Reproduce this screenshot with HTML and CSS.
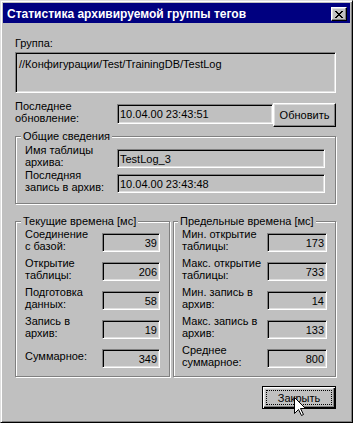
FILE: index.html
```html
<!DOCTYPE html>
<html lang="ru">
<head>
  <meta charset="UTF-8">
  <title>Статистика архивируемой группы тегов</title>
  <link rel="stylesheet" href="styles.css">
</head>
<body>
  <div class="window">
    <div class="titlebar">
      <span class="title">Статистика архивируемой группы тегов</span>
      <span class="close-btn">
        <svg width="8" height="7" viewBox="0 0 8 7" shape-rendering="crispEdges">
          <path d="M0 0h2v1h-2z M6 0h2v1h-2z M1 1h2v1h-2z M5 1h2v1h-2z M2 2h4v1h-4z M3 3h2v1h-2z M2 4h4v1h-4z M1 5h2v1h-2z M5 5h2v1h-2z M0 6h2v1h-2z M6 6h2v1h-2z" fill="#000"/>
        </svg>
      </span>
    </div>

    <div class="content">
      <div class="label">Группа:</div>
      <div class="field field-path">//Конфигурации/Test/TrainingDB/TestLog</div>

      <div class="row row-update">
        <div class="label label-update">Последнее<br>обновление:</div>
        <div class="field field-update">10.04.00 23:43:51</div>
        <button class="btn btn-update">Обновить</button>
      </div>

      <fieldset class="group group-general">
        <legend>Общие сведения</legend>
        <div class="row">
          <div class="label label-general">Имя таблицы<br>архива:</div>
          <div class="field field-general">TestLog_3</div>
        </div>
        <div class="row">
          <div class="label label-general">Последняя<br>запись в архив:</div>
          <div class="field field-general">10.04.00 23:43:48</div>
        </div>
      </fieldset>

      <div class="times">
        <fieldset class="group group-current">
          <legend>Текущие времена [мс]</legend>
          <div class="row">
            <div class="label">Соединение<br>с базой:</div>
            <div class="field field-num">39</div>
          </div>
          <div class="row">
            <div class="label">Открытие<br>таблицы:</div>
            <div class="field field-num">206</div>
          </div>
          <div class="row">
            <div class="label">Подготовка<br>данных:</div>
            <div class="field field-num">58</div>
          </div>
          <div class="row">
            <div class="label">Запись в<br>архив:</div>
            <div class="field field-num">19</div>
          </div>
          <div class="row">
            <div class="label label-single">Суммарное:</div>
            <div class="field field-num">349</div>
          </div>
        </fieldset>

        <fieldset class="group group-limits">
          <legend>Предельные времена [мс]</legend>
          <div class="row">
            <div class="label">Мин. открытие<br>таблицы:</div>
            <div class="field field-num">173</div>
          </div>
          <div class="row">
            <div class="label">Макс. открытие<br>таблицы:</div>
            <div class="field field-num">733</div>
          </div>
          <div class="row">
            <div class="label">Мин. запись в<br>архив:</div>
            <div class="field field-num">14</div>
          </div>
          <div class="row">
            <div class="label">Макс. запись в<br>архив:</div>
            <div class="field field-num">133</div>
          </div>
          <div class="row">
            <div class="label">Среднее<br>суммарное:</div>
            <div class="field field-num">800</div>
          </div>
        </fieldset>
      </div>

      <div class="footer">
        <button class="btn btn-default"><span class="focus">Закрыть</span></button>
      </div>
    </div>

    <!-- mouse pointer over the close button -->
    <svg class="cursor" width="12" height="20" viewBox="0 0 12 20">
      <polygon points="0.5,0.5 0.5,16.5 4.5,12.5 7.5,18.5 9.5,17.5 6.5,11.5 11.5,11.5" fill="#fff" stroke="#000" stroke-width="1"/>
    </svg>
  </div>
</body>
</html>
```

FILE: styles.css
```css
body {
  margin: 0;
  background: #c0c0c0;
}
.window {
  position: relative;
  width: 353px;
  height: 423px;
  box-sizing: border-box;
  padding: 2px;
  background: #c0c0c0;
  border: 1px solid;
  border-color: #dfdfdf #000 #000 #dfdfdf;
  box-shadow: inset 1px 1px #fff, inset -1px -1px #808080;
  font-family: "Liberation Sans", Arial, sans-serif;
  font-size: 11px;
  line-height: 12px;
  color: #000;
}
/* Заголовок окна */
.titlebar {
  display: flex;
  align-items: flex-start;
  height: 20px;
  background: #000080;
  color: #fff;
}
.title {
  flex: 1;
  padding: 2px 0 0 4px;
  font-size: 12px;
  font-weight: bold;
  line-height: 18px;
  white-space: nowrap;
}
.close-btn {
  display: flex;
  align-items: center;
  justify-content: center;
  width: 16px;
  height: 14px;
  box-sizing: border-box;
  margin: 4px 3px 0 0;
  background: #c0c0c0;
  border: 1px solid;
  border-color: #fff #000 #000 #fff;
  box-shadow: inset -1px -1px #808080, inset 1px 1px #dfdfdf;
}
.content {
  padding: 14px 14px 0 12px;
}
.label {
  white-space: nowrap;
}
/* Поля только для чтения */
.field {
  display: flex;
  align-items: center;
  box-sizing: border-box;
  height: 19px;
  padding: 0 2px;
  border: 1px solid;
  border-color: #808080 #fff #fff #808080;
  box-shadow: inset 1px 1px #000, inset -1px -1px #dfdfdf;
  white-space: nowrap;
}
.field-path {
  align-items: flex-start;
  height: 41px;
  margin-top: 3px;
  padding: 5px 3px;
}
.field-num {
  justify-content: flex-end;
}
.row {
  display: flex;
  align-items: flex-end;
}
.row-update {
  align-items: flex-start;
  margin-top: 7px;
}
.label-update {
  width: 102px;
}
.field-update {
  width: 156px;
  height: 20px;
  margin-top: 4px;
}
/* Кнопки */
.btn {
  display: flex;
  align-items: center;
  justify-content: center;
  box-sizing: border-box;
  padding: 0;
  background: #c0c0c0;
  font: inherit;
  color: #000;
  border: 1px solid;
  border-color: #fff #000 #000 #fff;
  box-shadow: inset -1px -1px #808080, inset 1px 1px #dfdfdf;
}
.btn-update {
  width: 63px;
  height: 24px;
  margin-top: 3px;
}
.btn-default {
  width: 74px;
  height: 23px;
  border-color: #000;
  box-shadow: inset 1px 1px #fff, inset -1px -1px #000, inset -2px -2px #808080, inset 2px 2px #dfdfdf;
}
.focus {
  display: flex;
  align-items: center;
  justify-content: center;
  align-self: stretch;
  flex: 1;
  margin: 3px;
  border: 1px dotted #000;
}
/* Рамки групп */
.group {
  min-width: 0;
  margin: 0;
  padding: 2px 10px 10px 9px;
  border: 1px solid #808080;
  box-shadow: inset 1px 1px #fff, 1px 1px #fff;
}
.group legend {
  margin-left: -4px;
  padding: 0 2px;
  line-height: 12px;
  background: #c0c0c0;
}
.group .row + .row {
  margin-top: 1px;
}
.group-general {
  margin-top: 3px;
}
.label-general {
  width: 92px;
  height: 24px;
}
.field-general {
  width: 208px;
}
.times {
  display: flex;
  gap: 3px;
  margin-top: 11px;
}
.group-current,
.group-limits {
  padding-top: 1px;
  padding-bottom: 8px;
}
.group-current {
  width: 155px;
  box-sizing: border-box;
  padding-right: 9px;
}
.group-limits {
  width: 163px;
  box-sizing: border-box;
  padding-left: 8px;
  padding-right: 8px;
}
.times .row + .row {
  margin-top: 5px;
}
.times .label {
  height: 24px;
}
.group-current .label {
  width: 77px;
}
.group-current .field {
  width: 58px;
}
.group-limits .label {
  width: 85px;
}
.group-limits .field {
  width: 60px;
}
.times .label-single {
  display: flex;
  align-items: center;
}
.footer {
  display: flex;
  justify-content: flex-end;
  margin-top: 9px;
}
.cursor {
  position: absolute;
  left: 293px;
  top: 396px;
}
```
